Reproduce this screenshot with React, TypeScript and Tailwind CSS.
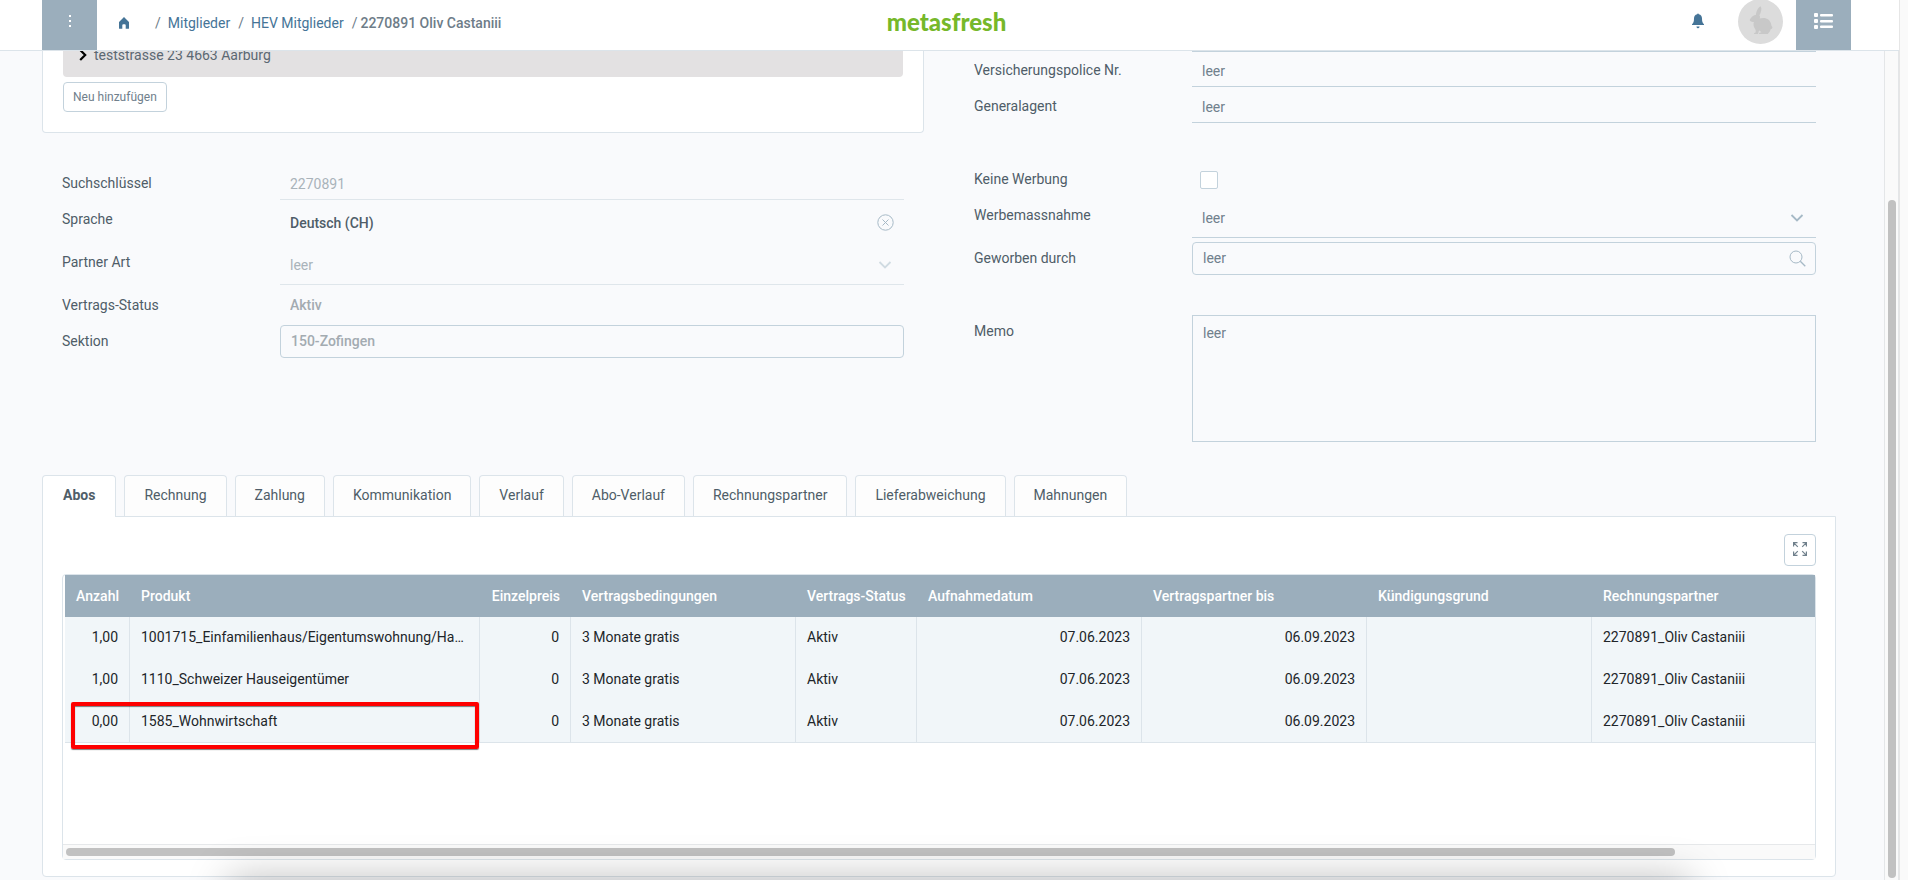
import type { ReactNode } from 'react'

const tabs = [
  'Abos',
  'Rechnung',
  'Zahlung',
  'Kommunikation',
  'Verlauf',
  'Abo-Verlauf',
  'Rechnungspartner',
  'Lieferabweichung',
  'Mahnungen',
]

const columns = [
  { title: 'Anzahl', width: 'w-[65px]', align: 'text-right' },
  { title: 'Produkt', width: 'w-[350px]', align: 'text-left' },
  { title: 'Einzelpreis', width: 'w-[91px]', align: 'text-right' },
  { title: 'Vertragsbedingungen', width: 'w-[225px]', align: 'text-left' },
  { title: 'Vertrags-Status', width: 'w-[121px]', align: 'text-left' },
  { title: 'Aufnahmedatum', width: 'w-[225px]', align: 'text-left' },
  { title: 'Vertragspartner bis', width: 'w-[225px]', align: 'text-left' },
  { title: 'Kündigungsgrund', width: 'w-[225px]', align: 'text-left' },
  { title: 'Rechnungspartner', width: '', align: 'text-left' },
]

const cellAlign = [
  'text-right',
  'text-left',
  'text-right',
  'text-left',
  'text-left',
  'text-right',
  'text-right',
  'text-left',
  'text-left',
]

const rows = [
  ['1,00', '1001715_Einfamilienhaus/Eigentumswohnung/Ha…'],
  ['1,00', '1110_Schweizer Hauseigentümer'],
  ['0,00', '1585_Wohnwirtschaft'],
].map((r) => [...r, '0', '3 Monate gratis', 'Aktiv', '07.06.2023', '06.09.2023', '', '2270891_Oliv Castaniii'])

const lineField = 'mt-px h-[33px] w-full border-b border-[#c3d2dc] bg-transparent px-2.5 pt-px outline-none placeholder:text-[#70808c]'
const boxField = 'mt-px h-[33px] w-full rounded-sm border border-[#c3d2dc] bg-transparent px-2.5 pb-0.5 outline-none placeholder:text-[#70808c]'
const selectField = 'h-10 w-full appearance-none border-b bg-transparent px-2.5 outline-none'

function Row({ label, id, height, children }: { label: string; id: string; height: string; children: ReactNode }) {
  return (
    <div className={`flex items-start ${height}`}>
      <label htmlFor={id} className="w-[218px] shrink-0 pt-[7px] leading-5 text-[#4f5d68]">
        {label}
      </label>
      <div className="relative min-w-0 flex-1">{children}</div>
    </div>
  )
}

function Chevron({ color }: { color: string }) {
  return (
    <svg className={`pointer-events-none absolute top-4 right-3 h-2 w-3.5 ${color}`} viewBox="0 0 14 8" fill="none" stroke="currentColor" strokeWidth="1.8">
      <path d="M1.5 1l5.5 5.5L12.5 1" />
    </svg>
  )
}

function Header() {
  return (
    <header className="relative z-10 flex h-[51px] items-start border-b border-[#dce4ea] bg-white pr-12 pl-[42px]">
      <div className="flex flex-1 items-center">
        <button aria-label="Menü" className="flex h-[50px] w-[55px] justify-center bg-[#9baebc] pt-[14px]">
          <svg className="h-3.5 w-1" viewBox="0 0 4 14" fill="#fff">
            <rect x="1" y="1" width="2" height="2" />
            <rect x="1" y="6" width="2" height="2" />
            <rect x="1" y="11" width="2" height="2" />
          </svg>
        </button>
        <nav className="-mt-1 flex items-center text-[#6d7c88]">
          <a href="#home" aria-label="Home" className="ml-[22px]">
            <svg className="h-3 w-2.5" viewBox="0 0 10 12" fill="#457497">
              <path d="M5 0L0 5v6.2q0 .6.6.6h2.7V8.2q0-1 1-1h1.4q1 0 1 1v3.6h2.7q.6 0 .6-.6V5z" />
            </svg>
          </a>
          <span className="ml-[26px]">/</span>
          <a href="#mitglieder" className="ml-[7px] text-[#457497]">Mitglieder</a>
          <span className="ml-2">/</span>
          <a href="#hev" className="ml-[7px] text-[#457497]">HEV Mitglieder</a>
          <span className="ml-2">/</span>
          <span className="ml-[3px] font-medium">2270891 Oliv Castaniii</span>
        </nav>
      </div>
      <div className="pt-1.5 font-[Lato] text-2xl leading-8 font-black text-[#76b82a]">metasfresh</div>
      <div className="flex flex-1 items-start justify-end">
        <button aria-label="Benachrichtigungen" className="mt-[13px] mr-[34px]">
          <svg className="h-4 w-3" viewBox="0 0 12 16" fill="#457497">
            <path d="M5.2 1.3a.8.8 0 011.6 0C9 1.8 10 3.5 10 5.6c0 3 .5 4.4 2 5.700v.7H0v-.7c1.500-1.300 2-2.700 2-5.700 0-2.100 1-3.800 3.200-4.300z" />
            <path d="M4.4 13.400h3.200q-.3 1.900-1.600 1.900t-1.600-1.900z" />
          </svg>
        </button>
        <button aria-label="Profil" className="-mt-px mr-[13px] flex size-[45px] justify-center rounded-full bg-[#dcdcdc] pt-[7px]">
          <svg className="h-7 w-6" viewBox="0 0 24 28" fill="#c8c8c8">
            <path d="M11.500.300c1 1 1.300 3.300.2 6.100-.4 1-.7 1.800-1.300 2.800.7.900.8 2.300.3 3.300 1.300-.5 3.300-.8 5-.5 4.200.700 6.500 4.200 6.800 8 1 .5 1.200 2 .3 2.700-.4.4-.8.400-1 .400-.5 1.800-1.600 3.600-3 4.900H10c-.1-1 .9-1.300 2.400-1.400-.7-1.100-1.400-1.600-2.400-2l-1 3.400H5c0-.8.500-1.300 1.600-1.400.3-1.500.2-2.600-.8-4-1.200-1.700-1.700-4-.9-6.500-1.300-.2-3.200-.4-3.900-1.300-.6-.8.100-1.900.8-2.600C3 10.700 4.700 9.200 7 8.800c.1-3 1.800-7 4.500-8.500z" />
          </svg>
        </button>
        <button aria-label="Aktionen" className="flex h-[50px] w-[55px] justify-center bg-[#9baebc] pt-[13px]">
          <svg className="h-4 w-[19px]" viewBox="0 0 19 16" fill="#fff">
            <rect x="0" y="0" width="4" height="4" rx="1" />
            <rect x="0" y="6" width="4" height="4" rx="1" />
            <rect x="0" y="12" width="4" height="4" rx="1" />
            <rect x="6" y="1" width="13" height="2.5" rx="1" />
            <rect x="6" y="7" width="13" height="2.5" rx="1" />
            <rect x="6" y="12.5" width="13" height="2.5" rx="1" />
          </svg>
        </button>
      </div>
    </header>
  )
}

function LeftColumn() {
  return (
    <div>
      <section className="-mt-5 rounded-b-sm border border-t-0 border-[#dce4ea] bg-white px-5 pb-5">
        <div className="flex h-[46px] items-center rounded-b-sm bg-[#e3e1e2] pt-0.5 pl-4 text-[#5b6873]">
          <svg className="mr-[7px] h-3 w-2" viewBox="0 0 8 12" fill="none" stroke="#000" strokeWidth="2.2">
            <path d="M1.2 1L6.2 6l-5 5" />
          </svg>
          teststrasse 23 4663 Aarburg
        </div>
        <button className="mt-[5px] block h-[30px] rounded-sm border border-[#c3d2dc] px-[9px] text-xs text-[#70808c]">
          Neu hinzufügen
        </button>
      </section>

      <section className="mt-[33px] px-5">
        <Row label="Suchschlüssel" id="key" height="h-9">
          <input id="key" disabled defaultValue="2270891" className="mt-px h-[33px] w-full border-b border-[#dfe6eb] bg-transparent px-2.5 pt-px text-[#a9b3ba]" />
        </Row>
        <Row label="Sprache" id="language" height="h-[43px]">
          <select id="language" className={`${selectField} border-transparent pt-0.5 font-medium text-[#4f5d68]`}>
            <option>Deutsch (CH)</option>
          </select>
          <svg className="pointer-events-none absolute top-3 right-2.5 size-[17px]" viewBox="0 0 17 17" fill="none" stroke="#a6b9c6">
            <circle cx="8.5" cy="8.5" r="7.7" />
            <path d="M5.5 5.500l6 6M11.500 5.500l-6 6" />
          </svg>
        </Row>
        <Row label="Partner Art" id="kind" height="h-[43px]">
          <select id="kind" disabled className={`${selectField} border-[#dfe6eb] text-[#a9b3ba] opacity-100`}>
            <option>leer</option>
          </select>
          <Chevron color="text-[#d0dbe2]" />
        </Row>
        <Row label="Vertrags-Status" id="status" height="h-9">
          <input id="status" disabled defaultValue="Aktiv" className="mt-px h-[33px] w-full bg-transparent px-2.5 pb-0.5 font-medium text-[#a3abb1]" />
        </Row>
        <Row label="Sektion" id="section" height="h-9">
          <input id="section" disabled defaultValue="150-Zofingen" className={`${boxField} font-medium text-[#a3abb1]`} />
        </Row>
      </section>
    </div>
  )
}

function RightColumn() {
  return (
    <div className="px-5">
      <div className="ml-[218px] h-0.5 border-t border-[#c3d2dc]" />
      <Row label="Versicherungspolice Nr." id="police" height="h-9">
        <input id="police" placeholder="leer" className={lineField} />
      </Row>
      <Row label="Generalagent" id="agent" height="h-9">
        <input id="agent" placeholder="leer" className={lineField} />
      </Row>
      <div className="mt-[37px]">
        <Row label="Keine Werbung" id="noads" height="h-9">
          <input id="noads" type="checkbox" className="mt-[9px] ml-2 block size-[18px] appearance-none rounded-xs border border-[#c3d2dc] bg-white" />
        </Row>
        <Row label="Werbemassnahme" id="campaign" height="h-[43px]">
          <select id="campaign" className={`${selectField} border-[#c3d2dc] text-[#70808c]`}>
            <option>leer</option>
          </select>
          <Chevron color="text-[#a6b9c6]" />
        </Row>
        <Row label="Geworben durch" id="referrer" height="h-9">
          <input id="referrer" placeholder="leer" className={boxField} />
          <svg className="pointer-events-none absolute top-[9px] right-2.5 size-[17px]" viewBox="0 0 17 17" fill="none" stroke="#a6b9c6">
            <circle cx="7" cy="7" r="6" />
            <path d="M11.3 11.3l5 5" strokeWidth="1.3" />
          </svg>
        </Row>
      </div>
      <div className="mt-[37px]">
        <Row label="Memo" id="memo" height="h-32">
          <textarea id="memo" placeholder="leer" className="mt-px block h-[127px] w-full resize-none border border-[#c3d2dc] bg-transparent px-2.5 py-[7px] leading-5 outline-none placeholder:text-[#70808c]" />
        </Row>
      </div>
    </div>
  )
}

function DataTable() {
  return (
    <div className="relative mt-2 rounded-sm border border-[#dce4ea] bg-white">
      <div className="overflow-hidden pb-[101px] pl-0.5">
        <table className="w-full table-fixed border-separate border-spacing-0">
          <thead>
            <tr className="h-[42px] bg-[#9baebc] text-white">
              {columns.map((col) => (
                <th key={col.title} className={`px-[11px] font-medium whitespace-nowrap ${col.width} ${col.align}`}>
                  {col.title}
                </th>
              ))}
            </tr>
          </thead>
          <tbody className="text-[#212529]">
            {rows.map((row, i) => (
              <tr key={i} className="h-[42px] bg-[#f1f6f9]">
                {row.map((cell, j) => (
                  <td
                    key={j}
                    className={`truncate border-r border-[#dce4ea] px-[11px] pb-0.5 last:border-r-0 ${cellAlign[j]} ${i === rows.length - 1 ? 'border-b' : ''}`}
                  >
                    {cell}
                  </td>
                ))}
              </tr>
            ))}
          </tbody>
        </table>
      </div>
      <div className="h-[15px] border-t border-[#e6e8ea] bg-[#fafafa] pt-[3px] pl-[3px]">
        <div className="h-2 w-[92%] rounded-full bg-[#c1c1c1]" />
      </div>
      {/* marked row */}
      <div className="pointer-events-none absolute top-[127px] left-2 h-[47px] w-[408px] rounded-xs border-4 border-[#fe0000] shadow-[0_1px_1px_rgba(0,0,0,0.5),inset_0_1px_1px_rgba(0,0,0,0.5)]" />
    </div>
  )
}

export default function App() {
  return (
    <div className="relative flex min-h-screen overflow-hidden bg-[#f9fafc] font-[Roboto,sans-serif] text-sm">
      <div className="flex min-w-0 flex-1 flex-col">
        <Header />
        <div className="flex flex-1">
          <main className="min-w-0 flex-1 pr-12 pb-[3px] pl-[42px]">
            <div className="grid grid-cols-2 gap-[30px]">
              <LeftColumn />
              <RightColumn />
            </div>

            <div role="tablist" className="mt-[33px] flex h-[41px] gap-2">
              {tabs.map((tab, i) => (
                <button
                  key={tab}
                  role="tab"
                  aria-selected={i === 0}
                  className={
                    i === 0
                      ? 'relative -mb-px rounded-t-sm border border-b-0 border-[#dce4ea] bg-white px-5 pb-[3px] font-bold text-[#4f5d68]'
                      : 'rounded-t-sm border border-b-0 border-[#dce4ea] bg-[#fdfdfd] px-[19px] pb-0.5 text-[#4f5d68]'
                  }
                >
                  {tab}
                </button>
              ))}
            </div>
            <section className="rounded-b-sm border border-[#dce4ea] bg-white px-[19px] pt-[17px] pb-4">
              <div className="flex justify-end">
                <button aria-label="Vollbild" className="flex size-8 items-center justify-center rounded-sm border border-[#c3d2dc] pb-0.5">
                  <svg className="size-3.5" viewBox="0 0 14 14" fill="none" stroke="#70808c" strokeWidth="1.2">
                    <path d="M.6 4.500V.600h3.900M.800.800l4 4M9.500.600h3.900v3.900M13.200.800l-4 4M.600 9.500v3.900h3.900M.800 13.200l4-4M13.400 9.500v3.900H9.500M13.200 13.200l-4-4" />
                  </svg>
                </button>
              </div>
              <DataTable />
            </section>
          </main>

          <div className="flex w-[15px] flex-col border-r border-l border-[#e4e6e8] bg-[#fafafa] pt-[149px] pb-0.5 pl-[3px]">
            <div className="w-2 flex-1 rounded-full bg-[#c1c1c1]" />
          </div>
        </div>
      </div>
      <div className="w-[9px] border-l border-[#e6e6e6] bg-[#fafafa]" />

      {/* shadow of the window below */}
      <div className="pointer-events-none absolute top-full right-[220px] left-[230px] h-10 shadow-[0_0_40px_2px_rgba(0,0,0,0.26)]" />
    </div>
  )
}
